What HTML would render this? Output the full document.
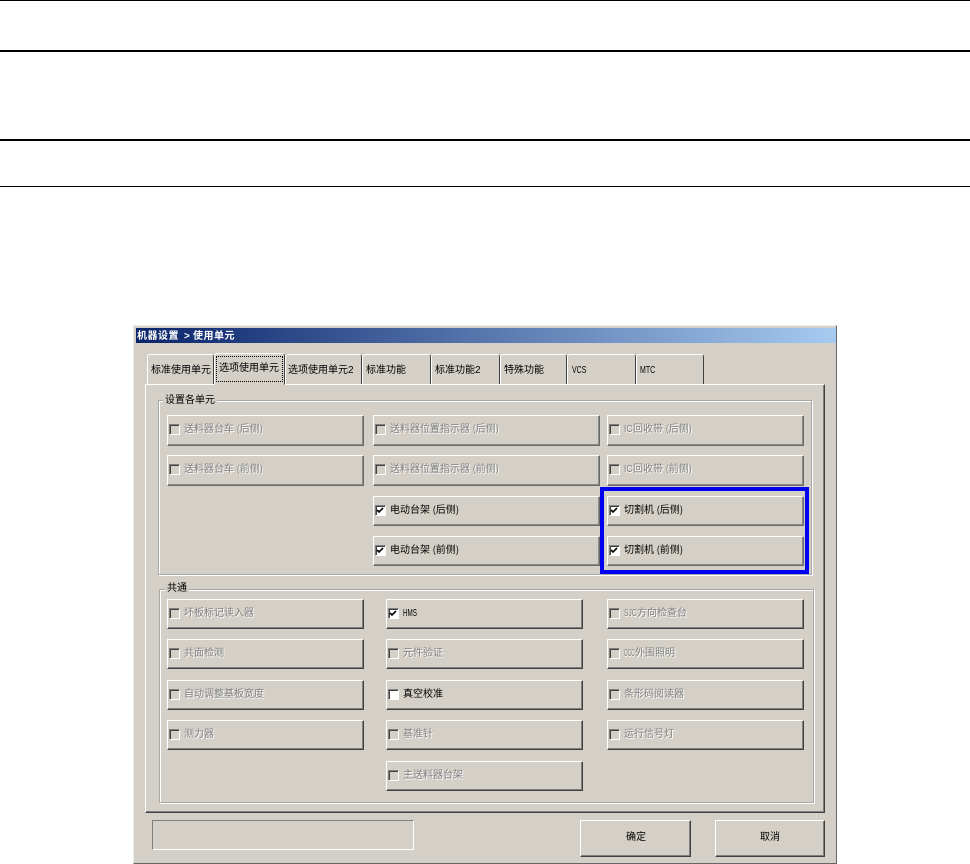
<!DOCTYPE html>
<html><head><meta charset="utf-8">
<style>
html,body{margin:0;padding:0;background:#fff}
body{width:970px;height:864px;position:relative;overflow:hidden;font:10px/14px "Liberation Sans","WenQuanYi Zen Hei","Noto Sans CJK SC",sans-serif;color:#000}
div,i,span{box-sizing:border-box;position:absolute;font-style:normal;white-space:nowrap}
b{font-weight:normal;display:inline-block;transform-origin:0 50%;transform:scaleX(.7)}
b.p{width:3px;transform:scaleX(.8)}
b.w3{width:15px}
b.ic{width:9px;transform:scaleX(.85)}
b.oc{width:11px;transform:scaleX(.48)}
b.sj{width:13px;transform:scaleX(.67)}
b.hm{width:14px;transform:scaleX(.63)}
.l{left:0;width:970px;background:#000}
.b{background:#d4d0c8;border:1px solid;border-color:#fff #404040 #404040 #fff;box-shadow:inset -1px -1px #808080}
.g{border-color:#fff #6a6a6a #6a6a6a #fff;box-shadow:inset -1px -1px #8a8a8a}
.b span{left:16px;top:7px}
.d span{color:#808080;text-shadow:1px 1px 0 #fff}
.c{left:1px;top:8px;width:11px;height:11px;background:#d4d0c8;border:1px solid;border-color:#808080 #fff #fff #808080;box-shadow:inset 1px 1px #404040}
.e{background:#fff}
.e svg,.k svg{position:absolute;left:0;top:0}
.t{top:354px;height:31px;background:#d4d0c8;border:1px solid;border-color:#fff #404040 #d4d0c8 #fff;border-radius:3px 3px 0 0;padding:0}
.t span{left:3px;top:9px}
.gp{background:#d4d0c8;border:1px solid #a8a8a8;box-shadow:inset 1px 1px #fff,1px 1px #fff}
.lg{background:#d4d0c8;padding:0 2px;line-height:13px}
.tt{top:329px;color:#fff;font-weight:bold;line-height:15px;letter-spacing:.5px}
</style></head><body>
<div class="l" style="top:0;height:1px"></div>
<div class="l" style="top:50px;height:2px"></div>
<div class="l" style="top:139px;height:2px"></div>
<div class="l" style="top:186px;height:1px"></div>

<div style="left:133px;top:325px;width:704px;height:539px;background:#d4d0c8;border:1px solid;border-color:#eee #666 #666 #eee"></div>
<div style="left:136px;top:328px;width:700px;height:15px;background:linear-gradient(90deg,#0a246a,#a6caf0)"></div>
<div class="tt" style="left:137px">机器设置</div>
<div class="tt" style="left:184px">&gt;</div>
<div class="tt" style="left:193px">使用单元</div>

<div class="t" style="left:147px;width:67px"><span>标准使用单元</span></div>
<div class="t" style="left:285px;width:77px"><span style="left:2px">选项使用单元2</span></div>
<div class="t" style="left:362px;width:69px"><span>标准功能</span></div>
<div class="t" style="left:431px;width:69px"><span>标准功能2</span></div>
<div class="t" style="left:500px;width:67px"><span>特殊功能</span></div>
<div class="t" style="left:567px;width:69px"><span style="left:4px"><b class="w3">VCS</b></span></div>
<div class="t" style="left:636px;width:68px"><span><b class="w3">MTC</b></span></div>

<div style="left:145px;top:384px;width:680px;height:429px;background:#d4d0c8;border:1px solid;border-color:#fff #404040 #404040 #fff;box-shadow:inset -1px -1px #808080"></div>
<div class="t" style="left:214px;top:353px;width:71px;height:32px;z-index:2"><span style="left:4px;top:8px">选项使用单元</span><i style="left:1px;top:2px;width:67px;height:26px;border:1px dotted #000"></i></div>

<div class="gp" style="left:158px;top:400px;width:654px;height:175px"></div>
<div class="lg" style="left:163px;top:394px">设置各单元</div>
<div class="gp" style="left:159px;top:589px;width:655px;height:214px"></div>
<div class="lg" style="left:165px;top:582px">共通</div>

<div class="b g d" style="left:167px;top:415px;width:197px;height:31px"><i class="c"></i><span>送料器台车 <b class="p">(</b>后侧<b class="p">)</b></span></div>
<div class="b g d" style="left:167px;top:455px;width:197px;height:31px"><i class="c"></i><span>送料器台车 <b class="p">(</b>前侧<b class="p">)</b></span></div>
<div class="b g d" style="left:373px;top:415px;width:227px;height:31px"><i class="c"></i><span>送料器位置指示器 <b class="p">(</b>后侧<b class="p">)</b></span></div>
<div class="b g d" style="left:373px;top:455px;width:227px;height:31px"><i class="c"></i><span>送料器位置指示器 <b class="p">(</b>前侧<b class="p">)</b></span></div>
<div class="b g d" style="left:607px;top:415px;width:197px;height:31px"><i class="c"></i><span><b class="ic">IC</b>回收带 <b class="p">(</b>后侧<b class="p">)</b></span></div>
<div class="b g d" style="left:607px;top:455px;width:197px;height:31px"><i class="c"></i><span><b class="ic">IC</b>回收带 <b class="p">(</b>前侧<b class="p">)</b></span></div>

<div class="b g" style="left:373px;top:496px;width:227px;height:30px"><i class="c e"><svg width="9" height="9" viewBox="0 0 9 9"><path d="M1 4l2 2 4-4" fill="none" stroke="#000" stroke-width="1.6"/></svg></i><span>电动台架 <b class="p">(</b>后侧<b class="p">)</b></span></div>
<div class="b g" style="left:373px;top:536px;width:227px;height:30px"><i class="c e"><svg width="9" height="9" viewBox="0 0 9 9"><path d="M1 4l2 2 4-4" fill="none" stroke="#000" stroke-width="1.6"/></svg></i><span>电动台架 <b class="p">(</b>前侧<b class="p">)</b></span></div>
<div class="b g" style="left:607px;top:496px;width:197px;height:30px"><i class="c e"><svg width="9" height="9" viewBox="0 0 9 9"><path d="M1 4l2 2 4-4" fill="none" stroke="#000" stroke-width="1.6"/></svg></i><span>切割机 <b class="p">(</b>后侧<b class="p">)</b></span></div>
<div class="b g" style="left:607px;top:536px;width:197px;height:30px"><i class="c e"><svg width="9" height="9" viewBox="0 0 9 9"><path d="M1 4l2 2 4-4" fill="none" stroke="#000" stroke-width="1.6"/></svg></i><span>切割机 <b class="p">(</b>前侧<b class="p">)</b></span></div>

<div style="left:600px;top:487px;width:209px;height:87px;border:4px solid #0000f0;z-index:3"></div>

<div class="b d" style="left:167px;top:599px;width:197px;height:30px"><i class="c"></i><span>坏板标记读入器</span></div>
<div class="b d" style="left:167px;top:639px;width:197px;height:30px"><i class="c"></i><span>共面检测</span></div>
<div class="b d" style="left:167px;top:680px;width:197px;height:30px"><i class="c"></i><span>自动调整基板宽度</span></div>
<div class="b d" style="left:167px;top:720px;width:197px;height:30px"><i class="c"></i><span>测力器</span></div>

<div class="b" style="left:386px;top:599px;width:197px;height:30px"><i class="c e"><svg width="9" height="9" viewBox="0 0 9 9"><path d="M1 4l2 2 4-4" fill="none" stroke="#000" stroke-width="1.6"/></svg></i><span><b class="hm">HMS</b></span></div>
<div class="b d" style="left:386px;top:639px;width:197px;height:30px"><i class="c"></i><span>元件验证</span></div>
<div class="b" style="left:386px;top:680px;width:197px;height:30px"><i class="c e"></i><span>真空校准</span></div>
<div class="b d" style="left:386px;top:720px;width:197px;height:30px"><i class="c"></i><span>基准针</span></div>
<div class="b d" style="left:386px;top:761px;width:197px;height:30px"><i class="c"></i><span>主送料器台架</span></div>

<div class="b d" style="left:607px;top:599px;width:197px;height:30px"><i class="c"></i><span><b class="sj">SJC</b>方向检查台</span></div>
<div class="b d" style="left:607px;top:639px;width:197px;height:30px"><i class="c"></i><span><b class="oc">OCC</b>外围照明</span></div>
<div class="b d" style="left:607px;top:680px;width:197px;height:30px"><i class="c"></i><span>条形码阅读器</span></div>
<div class="b d" style="left:607px;top:720px;width:197px;height:30px"><i class="c"></i><span>运行信号灯</span></div>

<div style="left:152px;top:820px;width:262px;height:30px;border:1px solid;border-color:#808080 #fff #fff #808080"></div>
<div class="b" style="left:580px;top:820px;width:111px;height:37px"><span style="left:45px;top:10px">确定</span></div>
<div class="b" style="left:715px;top:820px;width:110px;height:37px"><span style="left:44px;top:10px">取消</span></div>
</body></html>
